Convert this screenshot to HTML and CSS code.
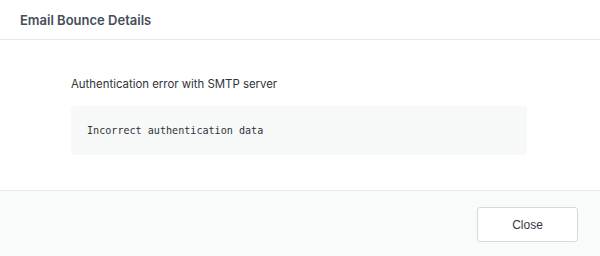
FILE: index.html
```html
<!DOCTYPE html>
<html>
<head>
<meta charset="utf-8">
<link rel="stylesheet" href="styles.css">
</head>
<body>
<div class="modal">
  <div class="modal-header">
    <h2 class="modal-title">Email Bounce Details</h2>
  </div>
  <div class="modal-body">
    <p class="reason">Authentication error with SMTP server</p>
    <pre class="code-box">Incorrect authentication data</pre>
  </div>
  <div class="modal-footer">
    <button class="btn">Close</button>
  </div>
</div>
</body>
</html>
```

FILE: styles.css
```css
html, body {
  margin: 0;
  padding: 0;
  background: #ffffff;
}
.modal {
  width: 600px;
  height: 256px;
  display: flex;
  flex-direction: column;
  font-family: Inter, "Noto Sans", sans-serif;
}
.modal-header {
  height: 40px;
  border-bottom: 1px solid #e6e8eb;
  display: flex;
  align-items: center;
  padding: 0 20px;
  box-sizing: border-box;
}
.modal-title {
  margin: 0;
  font-size: 13px;
  font-weight: 600;
  color: #454d59;
  padding-top: 0;
}
.modal-body {
  flex: 1;
  padding: 36px 73px 0 71px;
  box-sizing: border-box;
}
.reason {
  margin: 0;
  font-size: 11.4px;
  line-height: 16px;
  color: #2e3338;
}
.code-box {
  margin: 14px 0 0 0;
  width: 456px;
  height: 49px;
  box-sizing: border-box;
  background: #f7f8f8;
  border-radius: 3px;
  padding: 0 16px;
  display: flex;
  align-items: center;
  font-family: "DejaVu Sans Mono", monospace;
  font-size: 10.1px;
  color: #2e3338;
}
.modal-footer {
  height: 66px;
  border-top: 1px solid #e9ebed;
  background: #f9fafa;
  box-sizing: border-box;
  display: flex;
  justify-content: flex-end;
  align-items: flex-start;
  padding: 16px 22px 0 0;
}
.btn {
  width: 101px;
  height: 35px;
  background: #ffffff;
  border: 1px solid #d5d9de;
  border-radius: 3px;
  font-family: "Liberation Sans", Arial, sans-serif;
  font-size: 12px;
  color: #333840;
  cursor: pointer;
}
```
